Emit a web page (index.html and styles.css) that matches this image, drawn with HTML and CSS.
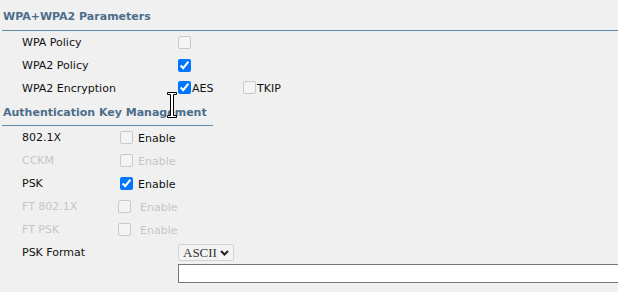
FILE: index.html
```html
<!DOCTYPE html>
<html>
<head>
<meta charset="utf-8">
<link rel="stylesheet" href="styles.css">
</head>
<body>
<div class="page">
  <h3 class="sec-title">WPA+WPA2 Parameters</h3>
  <div class="rows sec-a">
    <div class="row"><span class="lbl">WPA Policy</span><input class="cb" type="checkbox" disabled></div>
    <div class="row"><span class="lbl">WPA2 Policy</span><input class="cb" type="checkbox" checked></div>
    <div class="row"><span class="lbl">WPA2 Encryption</span><input class="cb cb-up" type="checkbox" checked><span class="opt aes">AES</span><input class="cb cb-up" type="checkbox"><span class="opt">TKIP</span></div>
  </div>
  <h3 class="sec-title short">Authentication Key Management</h3>
  <div class="rows sec-b">
    <div class="row"><span class="lbl">802.1X</span><input class="cb" type="checkbox"><span class="en">Enable</span></div>
    <div class="row dis"><span class="lbl">CCKM</span><input class="cb" type="checkbox" disabled><span class="en">Enable</span></div>
    <div class="row"><span class="lbl">PSK</span><input class="cb" type="checkbox" checked><span class="en">Enable</span></div>
    <div class="row dis ft"><span class="lbl">FT 802.1X</span><input class="cb" type="checkbox" disabled><span class="en">Enable</span></div>
    <div class="row dis ft"><span class="lbl">FT PSK</span><input class="cb" type="checkbox" disabled><span class="en">Enable</span></div>
    <div class="row wide"><span class="lbl">PSK Format</span>
      <span class="sel-wrap">
        <select class="sel"><option>ASCII</option><option>HEX</option></select>
        <svg class="chev" width="9" height="6" viewBox="0 0 9 6"><path d="M1 1 L4.5 4.5 L8 1" fill="none" stroke="#222" stroke-width="2"/></svg>
      </span>
    </div>
    <div class="input-row"><input class="txt" type="text"></div>
  </div>
</div>
<svg class="ibeam" width="11" height="27" viewBox="0 0 11 27"><path d="M0.5 0.5 H9.5 V2.5 H6.5 V23.5 H9.5 V25.5 H0.5 V23.5 H3.5 V2.5 H0.5 Z" fill="#fff" stroke="#000" stroke-width="1"/></svg>
</body>
</html>
```

FILE: styles.css
```css
html, body {
  margin: 0;
  padding: 0;
  background: #f0f0f0;
  overflow: hidden;
}
body {
  font-family: "DejaVu Sans", Verdana, sans-serif;
  font-size: 11px;
  color: #111;
  position: relative;
  width: 618px;
  height: 292px;
}
.page {
  padding: 1px 0 0 2px;
}
.sec-title {
  margin: 0;
  padding: 9px 0 6px 1px;
  line-height: 14px;
  font-size: 11px;
  font-weight: bold;
  color: #4b6d8b;
  border-bottom: 1px solid #5f8bab;
}
.sec-title.short {
  width: 210px;
  padding-top: 6px;
  padding-bottom: 5px;
}
.row {
  display: flex;
  align-items: center;
  height: 23px;
  padding-left: 20px;
}
.lbl {
  flex: none;
}
.sec-a .lbl { width: 156px; }
.sec-b .lbl { width: 98px; }
.sec-b .ft .lbl { width: 96px; }
.sec-b .wide .lbl { width: 156px; }
.cb {
  margin: 0;
  width: 13px;
  height: 13px;
  accent-color: #0075ff;
  flex: none;
}
.cb:not(:checked) {
  appearance: none;
  -webkit-appearance: none;
  box-sizing: border-box;
  border: 1px solid #c9c9c9;
  border-radius: 2px;
  background: #f4f4f4;
}
.cb-up { position: relative; top: -1px; }
.opt { margin-left: 1px; }
.opt.aes { width: 51px; }
.en {
  margin-left: 5px;
  position: relative;
  top: 1px;
}
.ft .en { margin-left: 9px; }
.dis .lbl, .dis .en { color: #c6c6c6; }
.sel-wrap {
  position: relative;
  display: inline-block;
}
.sel {
  appearance: none;
  -webkit-appearance: none;
  margin: 0;
  width: 56px;
  height: 17px;
  padding: 0 0 0 4px;
  border: 1px solid #d2d2d2;
  border-radius: 2px;
  background: #f3f3f3;
  font-family: "Liberation Serif", serif;
  font-size: 13px;
  color: #333;
  line-height: 15px;
}
.chev {
  position: absolute;
  left: 42px;
  top: 6px;
  pointer-events: none;
}
.input-row {
  padding-left: 176px;
  height: 19px;
}
.txt {
  margin: 0;
  width: 460px;
  height: 19px;
  box-sizing: border-box;
  border: 1px solid #767676;
  border-right: none;
  background: #fff;
  padding: 0;
}
.ibeam {
  position: absolute;
  left: 167px;
  top: 92px;
}
```
